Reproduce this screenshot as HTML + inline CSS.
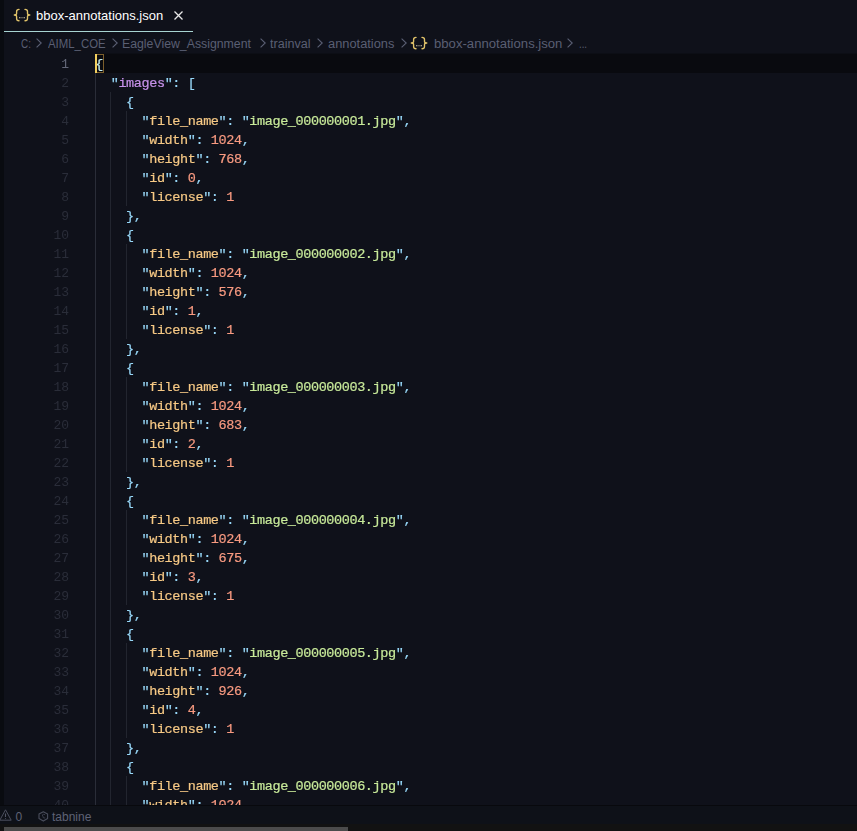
<!DOCTYPE html>
<html><head><meta charset="utf-8">
<style>
*{margin:0;padding:0;box-sizing:border-box}
html,body{width:857px;height:831px;overflow:hidden;background:#0F111A}
body{position:relative;font-family:"Liberation Sans",sans-serif}
.strip{position:absolute;left:0;top:0;width:4px;height:831px;background:#090B10}
.tab{position:absolute;left:4px;top:0;width:189px;height:32px;background:#0F111A;border-bottom:1px solid #A8D4D2}
.tt{position:absolute;left:36px;top:6.6px;color:#FFFFFF;font-size:13px;line-height:18px;white-space:nowrap}
.x{position:absolute;left:174px;top:10.5px;width:9px;height:9px}
.bc{position:absolute;top:36px;height:16px;color:#5A5F73;font-size:12.5px;line-height:16px;white-space:nowrap;transform-origin:0 0}
.chev{position:absolute;top:37.5px;width:6px;height:10px}
.lhl{position:absolute;left:95px;top:53px;width:762px;height:20px;background:#090A0F;border-top:1px solid #0C0E15}
.ln{position:absolute;left:20px;width:49px;margin-top:1px;text-align:right;font-family:"Liberation Mono",monospace;font-size:13px;line-height:19px;color:#2A2D39}
.ln.act{color:#646879}
.cl{position:absolute;left:95.3px;white-space:pre;font-family:"Liberation Mono",monospace;font-size:13.5px;letter-spacing:-0.4px;line-height:19px;color:#89DDFF;margin-top:1px;-webkit-text-stroke:0.2px currentColor}
.g{position:absolute;width:1px;background:#22252F}
.g.ga{background:#2A2D38}
.bm{color:#C8F0F0}
.bbox{position:absolute;left:97px;top:54px;width:7px;height:19px;border:1px solid #7C5F2C;border-left:none}
.cur{position:absolute;left:95px;top:54px;width:2px;height:19px;background:#F2CF5E}
.editor{position:absolute;left:0;top:0;width:857px;height:805px;overflow:hidden;will-change:transform}
.status{position:absolute;left:0;top:805px;width:857px;height:19px;background:#0E1118;border-top:1px solid #08090D;color:#5E6275;font-size:12px}
.bottom{position:absolute;left:0;top:824px;width:857px;height:7px;background:#121212}
.thumb{position:absolute;left:4px;top:3px;width:344px;height:4px;background:#4B4B4B}
</style></head><body>
<div class="strip"></div>
<div class="tab"></div>
<svg style="position:absolute;left:0.0px;top:0.0px;overflow:visible" width="1" height="1"><g fill="none" stroke="#E2C46A" stroke-width="1.35" stroke-linecap="round" stroke-linejoin="round"><path d="M19 9.4 Q16.6 9.4 16.6 11.6 V13.6 Q16.6 15 14.3 15 Q16.6 15 16.6 16.4 V18.5 Q16.6 20.7 19 20.7"/><path d="M25 9.4 Q27.5 9.4 27.5 11.6 V13.6 Q27.5 15 29.8 15 Q27.5 15 27.5 16.4 V18.5 Q27.5 20.7 25 20.7"/></g><rect x="19.2" y="17.1" width="1.2" height="1.2" fill="#D8D0B0"/><rect x="21.4" y="17.1" width="1.2" height="1.2" fill="#A09880"/><rect x="23.6" y="17.1" width="1.2" height="1.2" fill="#D8D0B0"/></svg>
<div class="tt">bbox-annotations.json</div>
<svg class="x" viewBox="0 0 9 9"><path d="M0.5 0.5L8.5 8.5M8.5 0.5L0.5 8.5" stroke="#E8E8E8" stroke-width="1.3"/></svg>
<div class="bc" style="left:20.60px;transform:scaleX(0.7920)">C:</div>
<svg class="chev" style="left:36.4px" viewBox="0 0 6 10"><path d="M0.6 0.6 L5.2 5 L0.6 9.4" fill="none" stroke="#5A5F73" stroke-width="1.1"/></svg>
<div class="bc" style="left:47.60px;transform:scaleX(0.9114)">AIML_COE</div>
<svg class="chev" style="left:112px" viewBox="0 0 6 10"><path d="M0.6 0.6 L5.2 5 L0.6 9.4" fill="none" stroke="#5A5F73" stroke-width="1.1"/></svg>
<div class="bc" style="left:122.40px;transform:scaleX(0.9832)">EagleView_Assignment</div>
<svg class="chev" style="left:259.5px" viewBox="0 0 6 10"><path d="M0.6 0.6 L5.2 5 L0.6 9.4" fill="none" stroke="#5A5F73" stroke-width="1.1"/></svg>
<div class="bc" style="left:269.50px;transform:scaleX(1.0050)">trainval</div>
<svg class="chev" style="left:316.8px" viewBox="0 0 6 10"><path d="M0.6 0.6 L5.2 5 L0.6 9.4" fill="none" stroke="#5A5F73" stroke-width="1.1"/></svg>
<div class="bc" style="left:328.30px;transform:scaleX(1.0279)">annotations</div>
<svg class="chev" style="left:400.8px" viewBox="0 0 6 10"><path d="M0.6 0.6 L5.2 5 L0.6 9.4" fill="none" stroke="#5A5F73" stroke-width="1.1"/></svg>
<svg style="position:absolute;left:397.0px;top:28.1px;overflow:visible" width="1" height="1"><g fill="none" stroke="#E2C46A" stroke-width="1.35" stroke-linecap="round" stroke-linejoin="round"><path d="M19 9.4 Q16.6 9.4 16.6 11.6 V13.6 Q16.6 15 14.3 15 Q16.6 15 16.6 16.4 V18.5 Q16.6 20.7 19 20.7"/><path d="M25 9.4 Q27.5 9.4 27.5 11.6 V13.6 Q27.5 15 29.8 15 Q27.5 15 27.5 16.4 V18.5 Q27.5 20.7 25 20.7"/></g><rect x="19.2" y="17.1" width="1.2" height="1.2" fill="#D8D0B0"/><rect x="21.4" y="17.1" width="1.2" height="1.2" fill="#A09880"/><rect x="23.6" y="17.1" width="1.2" height="1.2" fill="#D8D0B0"/></svg>
<div class="bc" style="left:433.50px;transform:scaleX(1.0499)">bbox-annotations.json</div>
<svg class="chev" style="left:566.6px" viewBox="0 0 6 10"><path d="M0.6 0.6 L5.2 5 L0.6 9.4" fill="none" stroke="#5A5F73" stroke-width="1.1"/></svg>
<div class="bc" style="left:579.00px;transform:scaleX(0.7692)">...</div>
<div class="editor">
<div class="lhl"></div>
<div class="g ga" style="left:95px;top:73px;height:760px"></div>
<div class="g" style="left:110px;top:92px;height:741px"></div>
<div class="g" style="left:126px;top:111px;height:95px"></div>
<div class="g" style="left:126px;top:244px;height:95px"></div>
<div class="g" style="left:126px;top:377px;height:95px"></div>
<div class="g" style="left:126px;top:510px;height:95px"></div>
<div class="g" style="left:126px;top:643px;height:95px"></div>
<div class="g" style="left:126px;top:776px;height:57px"></div>
<div class="ln act" style="top:54px">1</div>
<div class="ln" style="top:73px">2</div>
<div class="ln" style="top:92px">3</div>
<div class="ln" style="top:111px">4</div>
<div class="ln" style="top:130px">5</div>
<div class="ln" style="top:149px">6</div>
<div class="ln" style="top:168px">7</div>
<div class="ln" style="top:187px">8</div>
<div class="ln" style="top:206px">9</div>
<div class="ln" style="top:225px">10</div>
<div class="ln" style="top:244px">11</div>
<div class="ln" style="top:263px">12</div>
<div class="ln" style="top:282px">13</div>
<div class="ln" style="top:301px">14</div>
<div class="ln" style="top:320px">15</div>
<div class="ln" style="top:339px">16</div>
<div class="ln" style="top:358px">17</div>
<div class="ln" style="top:377px">18</div>
<div class="ln" style="top:396px">19</div>
<div class="ln" style="top:415px">20</div>
<div class="ln" style="top:434px">21</div>
<div class="ln" style="top:453px">22</div>
<div class="ln" style="top:472px">23</div>
<div class="ln" style="top:491px">24</div>
<div class="ln" style="top:510px">25</div>
<div class="ln" style="top:529px">26</div>
<div class="ln" style="top:548px">27</div>
<div class="ln" style="top:567px">28</div>
<div class="ln" style="top:586px">29</div>
<div class="ln" style="top:605px">30</div>
<div class="ln" style="top:624px">31</div>
<div class="ln" style="top:643px">32</div>
<div class="ln" style="top:662px">33</div>
<div class="ln" style="top:681px">34</div>
<div class="ln" style="top:700px">35</div>
<div class="ln" style="top:719px">36</div>
<div class="ln" style="top:738px">37</div>
<div class="ln" style="top:757px">38</div>
<div class="ln" style="top:776px">39</div>
<div class="ln" style="top:795px">40</div>
<div class="cl" style="top:54px"><span class="bm">{</span></div>
<div class="cl" style="top:73px">  <span style="color:#98D8F8">"</span><span style="color:#C792EA">images</span><span style="color:#98D8F8">"</span><span style="color:#98D8F8">: [</span></div>
<div class="cl" style="top:92px">    <span style="color:#98D8F8">{</span></div>
<div class="cl" style="top:111px">      <span style="color:#98D8F8">"</span><span style="color:#F7C985">file_name</span><span style="color:#98D8F8">"</span><span style="color:#98D8F8">: </span><span style="color:#98D8F8">"</span><span style="color:#C8EA9A">image_000000001.jpg</span><span style="color:#98D8F8">"</span><span style="color:#98D8F8">,</span></div>
<div class="cl" style="top:130px">      <span style="color:#98D8F8">"</span><span style="color:#F7C985">width</span><span style="color:#98D8F8">"</span><span style="color:#98D8F8">: </span><span style="color:#F89A80">1024</span><span style="color:#98D8F8">,</span></div>
<div class="cl" style="top:149px">      <span style="color:#98D8F8">"</span><span style="color:#F7C985">height</span><span style="color:#98D8F8">"</span><span style="color:#98D8F8">: </span><span style="color:#F89A80">768</span><span style="color:#98D8F8">,</span></div>
<div class="cl" style="top:168px">      <span style="color:#98D8F8">"</span><span style="color:#F7C985">id</span><span style="color:#98D8F8">"</span><span style="color:#98D8F8">: </span><span style="color:#F89A80">0</span><span style="color:#98D8F8">,</span></div>
<div class="cl" style="top:187px">      <span style="color:#98D8F8">"</span><span style="color:#F7C985">license</span><span style="color:#98D8F8">"</span><span style="color:#98D8F8">: </span><span style="color:#F89A80">1</span></div>
<div class="cl" style="top:206px">    <span style="color:#98D8F8">},</span></div>
<div class="cl" style="top:225px">    <span style="color:#98D8F8">{</span></div>
<div class="cl" style="top:244px">      <span style="color:#98D8F8">"</span><span style="color:#F7C985">file_name</span><span style="color:#98D8F8">"</span><span style="color:#98D8F8">: </span><span style="color:#98D8F8">"</span><span style="color:#C8EA9A">image_000000002.jpg</span><span style="color:#98D8F8">"</span><span style="color:#98D8F8">,</span></div>
<div class="cl" style="top:263px">      <span style="color:#98D8F8">"</span><span style="color:#F7C985">width</span><span style="color:#98D8F8">"</span><span style="color:#98D8F8">: </span><span style="color:#F89A80">1024</span><span style="color:#98D8F8">,</span></div>
<div class="cl" style="top:282px">      <span style="color:#98D8F8">"</span><span style="color:#F7C985">height</span><span style="color:#98D8F8">"</span><span style="color:#98D8F8">: </span><span style="color:#F89A80">576</span><span style="color:#98D8F8">,</span></div>
<div class="cl" style="top:301px">      <span style="color:#98D8F8">"</span><span style="color:#F7C985">id</span><span style="color:#98D8F8">"</span><span style="color:#98D8F8">: </span><span style="color:#F89A80">1</span><span style="color:#98D8F8">,</span></div>
<div class="cl" style="top:320px">      <span style="color:#98D8F8">"</span><span style="color:#F7C985">license</span><span style="color:#98D8F8">"</span><span style="color:#98D8F8">: </span><span style="color:#F89A80">1</span></div>
<div class="cl" style="top:339px">    <span style="color:#98D8F8">},</span></div>
<div class="cl" style="top:358px">    <span style="color:#98D8F8">{</span></div>
<div class="cl" style="top:377px">      <span style="color:#98D8F8">"</span><span style="color:#F7C985">file_name</span><span style="color:#98D8F8">"</span><span style="color:#98D8F8">: </span><span style="color:#98D8F8">"</span><span style="color:#C8EA9A">image_000000003.jpg</span><span style="color:#98D8F8">"</span><span style="color:#98D8F8">,</span></div>
<div class="cl" style="top:396px">      <span style="color:#98D8F8">"</span><span style="color:#F7C985">width</span><span style="color:#98D8F8">"</span><span style="color:#98D8F8">: </span><span style="color:#F89A80">1024</span><span style="color:#98D8F8">,</span></div>
<div class="cl" style="top:415px">      <span style="color:#98D8F8">"</span><span style="color:#F7C985">height</span><span style="color:#98D8F8">"</span><span style="color:#98D8F8">: </span><span style="color:#F89A80">683</span><span style="color:#98D8F8">,</span></div>
<div class="cl" style="top:434px">      <span style="color:#98D8F8">"</span><span style="color:#F7C985">id</span><span style="color:#98D8F8">"</span><span style="color:#98D8F8">: </span><span style="color:#F89A80">2</span><span style="color:#98D8F8">,</span></div>
<div class="cl" style="top:453px">      <span style="color:#98D8F8">"</span><span style="color:#F7C985">license</span><span style="color:#98D8F8">"</span><span style="color:#98D8F8">: </span><span style="color:#F89A80">1</span></div>
<div class="cl" style="top:472px">    <span style="color:#98D8F8">},</span></div>
<div class="cl" style="top:491px">    <span style="color:#98D8F8">{</span></div>
<div class="cl" style="top:510px">      <span style="color:#98D8F8">"</span><span style="color:#F7C985">file_name</span><span style="color:#98D8F8">"</span><span style="color:#98D8F8">: </span><span style="color:#98D8F8">"</span><span style="color:#C8EA9A">image_000000004.jpg</span><span style="color:#98D8F8">"</span><span style="color:#98D8F8">,</span></div>
<div class="cl" style="top:529px">      <span style="color:#98D8F8">"</span><span style="color:#F7C985">width</span><span style="color:#98D8F8">"</span><span style="color:#98D8F8">: </span><span style="color:#F89A80">1024</span><span style="color:#98D8F8">,</span></div>
<div class="cl" style="top:548px">      <span style="color:#98D8F8">"</span><span style="color:#F7C985">height</span><span style="color:#98D8F8">"</span><span style="color:#98D8F8">: </span><span style="color:#F89A80">675</span><span style="color:#98D8F8">,</span></div>
<div class="cl" style="top:567px">      <span style="color:#98D8F8">"</span><span style="color:#F7C985">id</span><span style="color:#98D8F8">"</span><span style="color:#98D8F8">: </span><span style="color:#F89A80">3</span><span style="color:#98D8F8">,</span></div>
<div class="cl" style="top:586px">      <span style="color:#98D8F8">"</span><span style="color:#F7C985">license</span><span style="color:#98D8F8">"</span><span style="color:#98D8F8">: </span><span style="color:#F89A80">1</span></div>
<div class="cl" style="top:605px">    <span style="color:#98D8F8">},</span></div>
<div class="cl" style="top:624px">    <span style="color:#98D8F8">{</span></div>
<div class="cl" style="top:643px">      <span style="color:#98D8F8">"</span><span style="color:#F7C985">file_name</span><span style="color:#98D8F8">"</span><span style="color:#98D8F8">: </span><span style="color:#98D8F8">"</span><span style="color:#C8EA9A">image_000000005.jpg</span><span style="color:#98D8F8">"</span><span style="color:#98D8F8">,</span></div>
<div class="cl" style="top:662px">      <span style="color:#98D8F8">"</span><span style="color:#F7C985">width</span><span style="color:#98D8F8">"</span><span style="color:#98D8F8">: </span><span style="color:#F89A80">1024</span><span style="color:#98D8F8">,</span></div>
<div class="cl" style="top:681px">      <span style="color:#98D8F8">"</span><span style="color:#F7C985">height</span><span style="color:#98D8F8">"</span><span style="color:#98D8F8">: </span><span style="color:#F89A80">926</span><span style="color:#98D8F8">,</span></div>
<div class="cl" style="top:700px">      <span style="color:#98D8F8">"</span><span style="color:#F7C985">id</span><span style="color:#98D8F8">"</span><span style="color:#98D8F8">: </span><span style="color:#F89A80">4</span><span style="color:#98D8F8">,</span></div>
<div class="cl" style="top:719px">      <span style="color:#98D8F8">"</span><span style="color:#F7C985">license</span><span style="color:#98D8F8">"</span><span style="color:#98D8F8">: </span><span style="color:#F89A80">1</span></div>
<div class="cl" style="top:738px">    <span style="color:#98D8F8">},</span></div>
<div class="cl" style="top:757px">    <span style="color:#98D8F8">{</span></div>
<div class="cl" style="top:776px">      <span style="color:#98D8F8">"</span><span style="color:#F7C985">file_name</span><span style="color:#98D8F8">"</span><span style="color:#98D8F8">: </span><span style="color:#98D8F8">"</span><span style="color:#C8EA9A">image_000000006.jpg</span><span style="color:#98D8F8">"</span><span style="color:#98D8F8">,</span></div>
<div class="cl" style="top:795px">      <span style="color:#98D8F8">"</span><span style="color:#F7C985">width</span><span style="color:#98D8F8">"</span><span style="color:#98D8F8">: </span><span style="color:#F89A80">1024</span><span style="color:#98D8F8">,</span></div>
<div class="bbox"></div>
<div class="cur"></div>
</div>
<div class="status">
<svg style="position:absolute;left:0;top:3.4px" width="12" height="12" viewBox="0 0 12 12"><path d="M5.5 0.8 L11.2 11.2 L-0.2 11.2 Z" fill="none" stroke="#525667" stroke-width="0.9"/><path d="M5.5 4.5 V8 M5.5 9.2 V10" stroke="#525667" stroke-width="1.1"/></svg>
<span style="position:absolute;left:15.5px;top:4px;line-height:15px">0</span>
<svg style="position:absolute;left:38px;top:5px" width="11" height="11" viewBox="0 0 11 11"><path d="M5.3 0.8 L9.6 3.1 V7.6 L5.3 10.1 L1 7.6 V3.1 Z" fill="none" stroke="#4A4E5C" stroke-width="1.1" stroke-linejoin="round"/><path d="M7 3.6 Q5.3 2.9 4.2 4 Q5.5 5.5 4.8 6.2 Q6 7.6 7.2 6.8" fill="none" stroke="#3E4250" stroke-width="0.9"/></svg>
<span style="position:absolute;left:52px;top:4px;line-height:15px">tabnine</span></div>
<div class="bottom"><div class="thumb"></div></div>
</body></html>
